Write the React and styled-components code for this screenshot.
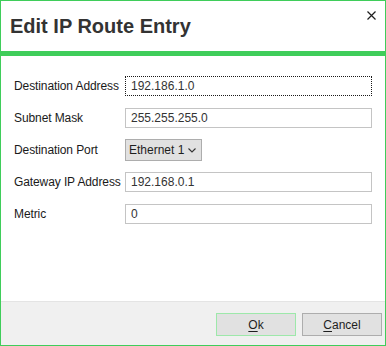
import React from "react";
import styled, { createGlobalStyle } from "styled-components";

const Global = createGlobalStyle`
  html, body { margin: 0; padding: 0; background: #ffffff; }
  * { box-sizing: border-box; }
`;

const Dialog = styled.div`
  width: 386px;
  height: 346px;
  border: 1px solid #3fcd5a;
  background: #ffffff;
  display: flex;
  flex-direction: column;
  font-family: "Liberation Sans", Arial, sans-serif;
  font-size: 12px;
  color: #1e1e1e;
`;

const Header = styled.div`
  height: 50px;
  display: flex;
  justify-content: space-between;
  align-items: flex-start;
  padding: 0 9px 0 9px;
`;

const Title = styled.h1`
  margin: 0;
  align-self: center;
  font-size: 20px;
  font-weight: bold;
  color: #333333;
  letter-spacing: 0;
`;

const CloseButton = styled.button`
  margin-top: 9px;
  width: 10px;
  height: 10px;
  padding: 0;
  border: none;
  background: transparent;
  display: flex;
  align-items: center;
  justify-content: center;
`;

const Accent = styled.div`
  height: 5px;
  background: #3fcd5a;
`;

const Body = styled.div`
  flex: 1;
  display: grid;
  grid-template-columns: 111px 247px;
  grid-auto-rows: 20px;
  row-gap: 12px;
  align-items: center;
  align-content: start;
  padding: 20px 13px 0 13px;
`;

const Label = styled.label`
  font-size: 12px;
  letter-spacing: -0.1px;
  color: #1a1a1a;
  white-space: nowrap;
`;

const Input = styled.div`
  height: 20px;
  border: 1px ${(p) => (p.$focused ? "dotted #1a1a1a" : "solid #c4c4c4")};
  padding: 0 5px;
  display: flex;
  align-items: center;
  color: #333333;
  font-size: 12px;
  background: #ffffff;
`;

const Select = styled.div`
  justify-self: start;
  width: 77px;
  height: 22px;
  border: 1px solid #adadad;
  background: #e1e1e1;
  padding: 0 3px;
  display: flex;
  align-items: center;
  gap: 4px;
  white-space: nowrap;
  color: #1e1e1e;
  font-size: 12px;
`;

const Footer = styled.div`
  height: 44px;
  background: #f0f0f0;
  border-top: 1px solid #e4e4e4;
  display: flex;
  justify-content: flex-end;
  align-items: flex-start;
  gap: 6px;
  padding: 11px 3px 0 0;
`;

const Button = styled.button`
  width: 80px;
  height: 23px;
  border: 1px solid ${(p) => (p.$default ? "#9de8aa" : "#adadad")};
  background: #e1e1e1;
  font-family: "Liberation Sans", Arial, sans-serif;
  font-size: 12px;
  color: #1e1e1e;
  padding: 0;
  u { text-decoration: underline; text-underline-offset: 2px; }
`;

const fields = [
  { label: "Destination Address", value: "192.186.1.0", focused: true },
  { label: "Subnet Mask", value: "255.255.255.0" },
  { label: "Destination Port", select: "Ethernet 1" },
  { label: "Gateway IP Address", value: "192.168.0.1" },
  { label: "Metric", value: "0" },
];

export default function App() {
  return (
    <>
      <Global />
      <Dialog>
        <Header>
          <Title>Edit IP Route Entry</Title>
          <CloseButton aria-label="Close">
            <svg width="9" height="9" viewBox="0 0 9 9">
              <path d="M0.5 0.5 L8.5 8.5 M8.5 0.5 L0.5 8.5" stroke="#1e1e1e" strokeWidth="1.2" />
            </svg>
          </CloseButton>
        </Header>
        <Accent />
        <Body>
          {fields.map((f) => (
            <React.Fragment key={f.label}>
              <Label>{f.label}</Label>
              {f.select ? (
                <Select>
                  <span>{f.select}</span>
                  <svg width="8" height="5" viewBox="0 0 8 5">
                    <path d="M0.5 0.5 L4 4 L7.5 0.5" fill="none" stroke="#333" strokeWidth="1.1" />
                  </svg>
                </Select>
              ) : (
                <Input $focused={f.focused}>{f.value}</Input>
              )}
            </React.Fragment>
          ))}
        </Body>
        <Footer>
          <Button $default>
            <u>O</u>k
          </Button>
          <Button>
            <u>C</u>ancel
          </Button>
        </Footer>
      </Dialog>
    </>
  );
}
